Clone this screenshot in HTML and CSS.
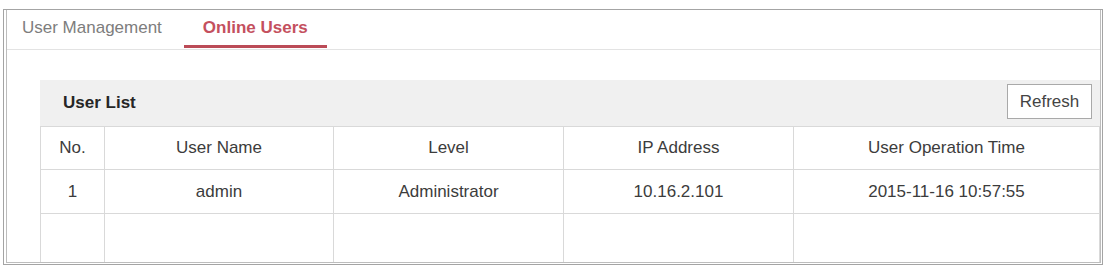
FILE: index.html
```html
<!DOCTYPE html>
<html lang="en">
<head>
<meta charset="utf-8">
<title>Online Users</title>
<link rel="stylesheet" href="styles.css">
</head>
<body>
<div class="frame">
  <div class="frame-inner">
    <div class="tabbar">
      <div class="tab tab-first">User Management</div>
      <div class="tab tab-active">Online Users</div>
    </div>
    <div class="content">
      <div class="list-header">
        <span class="list-title">User List</span>
        <button class="btn-refresh" type="button">Refresh</button>
      </div>
      <table class="user-table">
        <colgroup>
          <col class="c-no">
          <col class="c-name">
          <col class="c-level">
          <col class="c-ip">
          <col class="c-time">
        </colgroup>
        <thead>
          <tr>
            <th>No.</th>
            <th>User Name</th>
            <th>Level</th>
            <th>IP Address</th>
            <th>User Operation Time</th>
          </tr>
        </thead>
        <tbody>
          <tr>
            <td>1</td>
            <td>admin</td>
            <td>Administrator</td>
            <td>10.16.2.101</td>
            <td>2015-11-16 10:57:55</td>
          </tr>
          <tr class="row-empty">
            <td></td><td></td><td></td><td></td><td></td>
          </tr>
        </tbody>
      </table>
    </div>
  </div>
</div>
</body>
</html>
```

FILE: styles.css
```css
html, body {
  margin: 0;
  padding: 0;
  background: #ffffff;
}

body {
  font-family: "Liberation Sans", Arial, sans-serif;
  font-size: 17px;
  color: #3c3c3c;
}

.frame {
  box-sizing: border-box;
  width: 1100px;
  height: 256px;
  margin: 9px 0 0 3px;
  border: 1px solid #a4a4a4;
  display: flex;
  flex-direction: column;
}

.frame-inner {
  box-sizing: border-box;
  flex: 1;
  margin: 0 1px 1px 2px;
  border: 1px solid #bdbdbd;
  border-top: none;
  overflow: hidden;
  background: #ffffff;
}

.tabbar {
  display: flex;
  align-items: flex-start;
  height: 39px;
  border-bottom: 1px solid #e3e3e3;
}

.tab {
  box-sizing: border-box;
  height: 38px;
  padding: 0 19px;
  line-height: 35px;
  color: #7d7d7d;
  white-space: nowrap;
}

.tab-first {
  padding: 0 20px 0 15px;
}

.tab-active {
  margin-left: 2px;
  color: #c4505e;
  font-weight: bold;
  border-bottom: 3px solid #bb4b57;
}

.content {
  padding: 30px 0 0 33px;
}

.list-header {
  box-sizing: border-box;
  height: 46px;
  background: #f0f0f0;
  display: flex;
  align-items: center;
  justify-content: space-between;
  padding: 0 8px 3px 23px;
}

.list-title {
  font-weight: bold;
  color: #262626;
  padding-top: 3px;
}

.btn-refresh {
  box-sizing: border-box;
  width: 85px;
  height: 35px;
  background: #ffffff;
  border: 1px solid #a9a9a9;
  border-radius: 0;
  font-family: "Liberation Sans", Arial, sans-serif;
  font-size: 17px;
  color: #444444;
  padding: 0;
}

.user-table {
  border-collapse: collapse;
  table-layout: fixed;
  width: 1059px;
}

.c-no { width: 64px; }
.c-name { width: 229px; }
.c-level { width: 230px; }
.c-ip { width: 230px; }
.c-time { width: 306px; }

.user-table th,
.user-table td {
  border: 1px solid #d9d9d9;
  text-align: center;
  font-weight: normal;
  color: #3c3c3c;
  padding: 0;
}

.user-table thead tr { height: 43px; }
.user-table tbody tr { height: 44px; }
.user-table .row-empty { height: 60px; }
```
